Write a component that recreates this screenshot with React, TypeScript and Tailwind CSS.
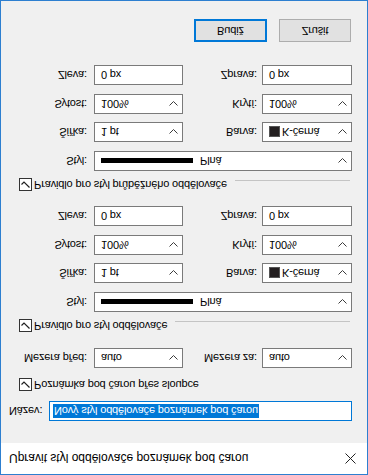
import type { ReactNode } from 'react';

const font = "font-['Liberation_Sans',Arial,sans-serif]";

function Chevron() {
  return (
    <svg width="9" height="5" viewBox="0 0 9 5" className="shrink-0">
      <polyline points="0.5,0.5 4.5,4.5 8.5,0.5" fill="none" stroke="#3c3c3c" strokeWidth="1" />
    </svg>
  );
}

function TextBox({ children, className = '' }: { children: ReactNode; className?: string }) {
  return (
    <div className={`h-5 border border-[#7a7a7a] bg-white flex items-center pl-[6px] ${className}`}>
      {children}
    </div>
  );
}

function Combo({ children, className = '' }: { children: ReactNode; className?: string }) {
  return (
    <div className={`h-5 border border-[#7a7a7a] bg-white flex items-center justify-between pl-[6px] pr-[4px] ${className}`}>
      <div className="flex items-center">{children}</div>
      <Chevron />
    </div>
  );
}

function Check({ label, className = '' }: { label: string; className?: string }) {
  return (
    <div className={`flex items-start h-[13px] pl-[18px] pr-[17px] ${className}`}>
      <div className="w-[13px] h-[13px] border border-[#333333] bg-white flex items-center justify-center shrink-0">
        <svg width="11" height="11" viewBox="0 0 11 11">
          <polyline points="1.5,5.5 4,8 9.5,2.5" fill="none" stroke="#202020" strokeWidth="1.2" />
        </svg>
      </div>
      <span className="ml-[2px] leading-[13px] whitespace-nowrap">{label}</span>
    </div>
  );
}

function CheckWithLine({ label, className = '' }: { label: string; className?: string }) {
  return (
    <div className={`flex items-start h-[13px] pl-[18px] pr-[17px] ${className}`}>
      <div className="w-[13px] h-[13px] border border-[#333333] bg-white flex items-center justify-center shrink-0">
        <svg width="11" height="11" viewBox="0 0 11 11">
          <polyline points="1.5,5.5 4,8 9.5,2.5" fill="none" stroke="#202020" strokeWidth="1.2" />
        </svg>
      </div>
      <span className="ml-[2px] leading-[13px] whitespace-nowrap">{label}</span>
      <div className="flex-1 ml-[8px] mt-[10px] border-t border-[#c4c4c4]" />
    </div>
  );
}

function PairRow({
  leftLabel,
  left,
  rightLabel,
  right,
  className = '',
}: {
  leftLabel: string;
  left: ReactNode;
  rightLabel: string;
  right: ReactNode;
  className?: string;
}) {
  return (
    <div className={`flex items-center h-5 ${className}`}>
      <div className="w-[86px] text-right whitespace-nowrap">{leftLabel}</div>
      <div className="ml-[7px] w-[89px]">{left}</div>
      <div className="w-[74px] text-right whitespace-nowrap">{rightLabel}</div>
      <div className="ml-[5px] w-[90px]">{right}</div>
    </div>
  );
}

function StyleRow({ className = '' }: { className?: string }) {
  return (
    <div className={`flex items-center h-5 ${className}`}>
      <div className="w-[86px] text-right">Styl:</div>
      <div className="ml-[7px] w-[258px]">
        <Combo>
          <div className="w-[92px] h-[5px] bg-black" />
          <span className="ml-[7px]">Plná</span>
        </Combo>
      </div>
    </div>
  );
}

function ColorValue() {
  return (
    <>
      <div className="w-[11px] h-[11px] bg-[#231f20] border border-[#555]" />
      <span className="ml-[2px]">K-černá</span>
    </>
  );
}

function RuleGroup({ first }: { first: string }) {
  return (
    <>
      <StyleRow className={first} />
      <PairRow
        className="mt-[9px]"
        leftLabel="Šířka:"
        left={<Combo>1 pt</Combo>}
        rightLabel="Barva:"
        right={<Combo><ColorValue /></Combo>}
      />
      <PairRow
        className="mt-[8px]"
        leftLabel="Sytost:"
        left={<Combo>100%</Combo>}
        rightLabel="Krytí:"
        right={<Combo>100%</Combo>}
      />
      <PairRow
        className="mt-[9px]"
        leftLabel="Zleva:"
        left={<TextBox>0 px</TextBox>}
        rightLabel="Zprava:"
        right={<TextBox>0 px</TextBox>}
      />
    </>
  );
}

export default function App() {
  return (
    <div className={`w-[368px] h-[475px] [transform:scaleY(-1)] ${font} text-[11px] tracking-[-0.15px] text-[#000]`}>
      <div className="w-full h-full border border-[#2d7fd0] flex flex-col bg-[#f0f0f0]">
        {/* Titulek */}
        <div className="h-[31px] bg-white flex items-center justify-between pl-2 pr-[11px] shrink-0">
          <span className="text-[12px] tracking-normal">Upravit styl oddělovače poznámek pod čarou</span>
          <svg width="11" height="11" viewBox="0 0 11 11">
            <path d="M0.5 0.5 L10.5 10.5 M10.5 0.5 L0.5 10.5" stroke="#222" strokeWidth="1" />
          </svg>
        </div>

        {/* Obsah */}
        <div className="flex-1 flex flex-col">
          <div className="flex items-center h-5 mt-[22px]">
            <div className="pl-2 w-[48px]">Název:</div>
            <div className="w-[303px] h-5 border border-[#0078d7] bg-white flex items-center pl-[3px]">
              <span className="bg-[#0078d7] text-white leading-[14px] px-[1px]">
                Nový styl oddělovače poznámek pod čarou
              </span>
            </div>
          </div>

          <Check className="mt-[10px]" label="Poznámka pod čarou přes sloupce" />

          <PairRow
            className="mt-[10px]"
            leftLabel="Mezera před:"
            left={<Combo>auto</Combo>}
            rightLabel="Mezera za:"
            right={<Combo>auto</Combo>}
          />

          <CheckWithLine className="mt-[16px]" label="Pravidlo pro styl oddělovače" />
          <RuleGroup first="mt-[7px]" />

          <CheckWithLine className="mt-[15px]" label="Pravidlo pro styl průběžného oddělovače" />
          <RuleGroup first="mt-[7px]" />

          <div className="flex justify-end gap-3 pr-4 mt-[23px]">
            <button className="w-[73px] h-[23px] border-2 border-[#0078d7] bg-[#e1e1e1] text-[11px]">
              Budiž
            </button>
            <button className="w-[72px] h-[23px] border border-[#adadad] bg-[#e1e1e1] text-[11px]">
              Zrušit
            </button>
          </div>
        </div>
      </div>
    </div>
  );
}
